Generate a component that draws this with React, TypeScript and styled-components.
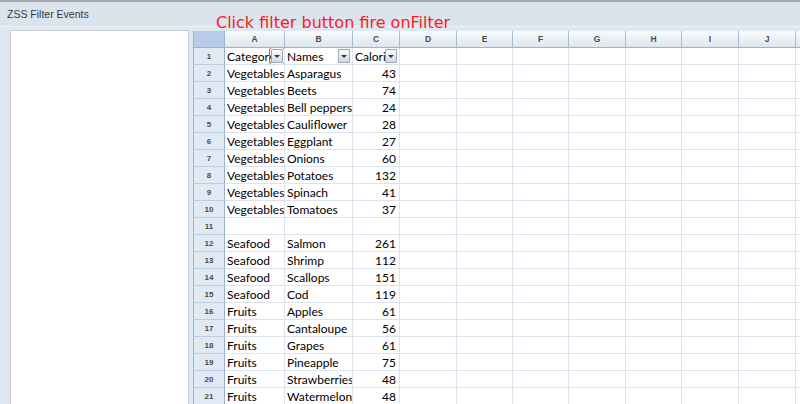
import * as React from 'react';
import styled, { createGlobalStyle } from 'styled-components';

const GlobalStyle = createGlobalStyle`
    html, body {
        margin: 0;
        padding: 0;
        overflow: hidden;
        background: #ffffff;
    }
`

const Window = styled.div`
    position: relative;
    width: 800px;
    height: 404px;
    overflow: hidden;
    box-sizing: border-box;
    background: #dfe8f1;
    border-top: 2px solid #a8a8a8;
    display: flex;
    flex-direction: column;
`

const TitleBar = styled.div`
    height: 25px;
    line-height: 24px;
    padding: 0 0 0 7px;
    box-sizing: border-box;
    background: #d9e4ef;
    border-bottom: 1px solid #edf2f7;
    font-family: 'Liberation Sans', Arial, sans-serif;
    font-size: 10.5px;
    color: #3a3a3a;
    flex: none;
`

const Hint = styled.div`
    position: absolute;
    left: 216px;
    top: 13px;
    font-family: 'DejaVu Sans', sans-serif;
    font-size: 16px;
    line-height: 16px;
    color: #ff1a1a;
    white-space: nowrap;
`

const Body = styled.div`
    flex: 1;
    display: flex;
    gap: 4px;
    padding: 3px 0 0 10px;
    min-height: 0;
`

const LeftPanel = styled.div`
    width: 179px;
    flex: none;
    box-sizing: border-box;
    background: #ffffff;
    border: 1px solid #c8d1da;
    border-bottom: none;
`

const SheetArea = styled.div`
    flex: 1;
    margin-top: 1px;
    overflow: hidden;
    background: #ffffff;
`

const COLS = [32, 60, 68, 47, 57, 56, 56, 57, 56, 57, 57, 57];
const ROW_COUNT = 22;

const Sheet = styled.div`
    display: grid;
    width: max-content;
    grid-template-columns: ${COLS.map((c) => `${c}px`).join(' ')};
    grid-template-rows: 17px repeat(${ROW_COUNT}, 17px);
    font-family: Lato, 'Liberation Sans', sans-serif;
`

const Corner = styled.div`
    box-sizing: border-box;
    background: #b8cce9;
    border-left: 1px solid #9cb2cf;
    border-right: 1px solid #9cb2cf;
    border-bottom: 1px solid #9cb2cf;
`

const ColHeader = styled.div`
    box-sizing: border-box;
    background: linear-gradient(#f8fafd, #dee6f0);
    border-right: 1px solid #a8bcd4;
    border-bottom: 1px solid #9db2cc;
    display: flex;
    align-items: center;
    justify-content: center;
    font-family: 'Liberation Sans', Arial, sans-serif;
    font-size: 8.5px;
    font-weight: bold;
    color: #4a4a4a;
`

const RowHeader = styled.div`
    box-sizing: border-box;
    background: #e1e9f5;
    border-left: 1px solid #9cb2cf;
    border-right: 1px solid #9cb2cf;
    border-bottom: 1px solid #bccde2;
    display: flex;
    align-items: center;
    justify-content: center;
    font-family: 'Liberation Sans', Arial, sans-serif;
    font-size: 8px;
    font-weight: bold;
    color: #4a4a4a;
`

const Cell = styled.div<{ $align?: 'left' | 'right' }>`
    box-sizing: border-box;
    border-right: 1px solid #dae3ee;
    border-bottom: 1px solid #dae3ee;
    display: flex;
    align-items: center;
    justify-content: ${(p) => (p.$align === 'right' ? 'flex-end' : 'flex-start')};
    padding: 0 ${(p) => (p.$align === 'right' ? '3px' : '0')} 0 2px;
    overflow: hidden;
    min-width: 0;
    font-size: 12px;
    color: #000000;
`

const CellText = styled.span`
    flex: 0 1 auto;
    min-width: 0;
    overflow: hidden;
    white-space: nowrap;
`

const HeadText = styled(CellText)`
    flex: 1 1 auto;
`

const FilterButton = styled.button<{ $active?: boolean }>`
    flex: none;
    width: 12px;
    height: 14px;
    margin: 0 1px 0 0;
    padding: 0;
    box-sizing: border-box;
    border: 1px solid #98a6b8;
    border-radius: 1px;
    background: linear-gradient(#fbfcfd, #d3d9e2);
    display: flex;
    align-items: center;
    justify-content: center;
    cursor: pointer;
    outline: ${(p) => (p.$active ? '1px solid #e8474a' : 'none')};
    outline-offset: 1px;

    &::after {
        content: '';
        width: 0;
        height: 0;
        border-left: 3px solid transparent;
        border-right: 3px solid transparent;
        border-top: 3px solid #2f3b4c;
    }
`

const letters = ['A', 'B', 'C', 'D', 'E', 'F', 'G', 'H', 'I', 'J', 'K'];

const rows: [string, string, number][] = [
    ['Vegetables', 'Asparagus', 43],
    ['Vegetables', 'Beets', 74],
    ['Vegetables', 'Bell peppers', 24],
    ['Vegetables', 'Cauliflower', 28],
    ['Vegetables', 'Eggplant', 27],
    ['Vegetables', 'Onions', 60],
    ['Vegetables', 'Potatoes', 132],
    ['Vegetables', 'Spinach', 41],
    ['Vegetables', 'Tomatoes', 37],
    ['', '', 0],
    ['Seafood', 'Salmon', 261],
    ['Seafood', 'Shrimp', 112],
    ['Seafood', 'Scallops', 151],
    ['Seafood', 'Cod', 119],
    ['Fruits', 'Apples', 61],
    ['Fruits', 'Cantaloupe', 56],
    ['Fruits', 'Grapes', 61],
    ['Fruits', 'Pineapple', 75],
    ['Fruits', 'Strawberries', 48],
    ['Fruits', 'Watermelon', 48],
    ['', '', 0],
];

const headers = ['Category', 'Names', 'Calories'];

function EmptyCells({ from }: { from: number }) {
    return (
        <>
            {letters.slice(from).map((l) => (
                <Cell key={l} />
            ))}
        </>
    );
}

export default function App() {
    return (
        <>
            <GlobalStyle />
            <Window>
                <TitleBar>ZSS Filter Events</TitleBar>
                <Hint>Click filter button fire onFilter</Hint>
                <Body>
                    <LeftPanel />
                    <SheetArea>
                        <Sheet>
                            <Corner />
                            {letters.map((l) => (
                                <ColHeader key={l}>{l}</ColHeader>
                            ))}

                            <RowHeader>1</RowHeader>
                            {headers.map((h, i) => (
                                <Cell key={h} style={{ paddingRight: i === 0 ? 0 : 1 }}>
                                    <HeadText>{h}</HeadText>
                                    <FilterButton $active={i === 0} aria-label={`Filter ${h}`} />
                                </Cell>
                            ))}
                            <EmptyCells from={3} />

                            {rows.map((r, i) => (
                                <React.Fragment key={i}>
                                    <RowHeader>{i + 2}</RowHeader>
                                    <Cell><CellText>{r[0]}</CellText></Cell>
                                    <Cell><CellText>{r[1]}</CellText></Cell>
                                    <Cell $align="right"><CellText>{r[2] ? r[2] : ''}</CellText></Cell>
                                    <EmptyCells from={3} />
                                </React.Fragment>
                            ))}
                        </Sheet>
                    </SheetArea>
                </Body>
            </Window>
        </>
    );
}
